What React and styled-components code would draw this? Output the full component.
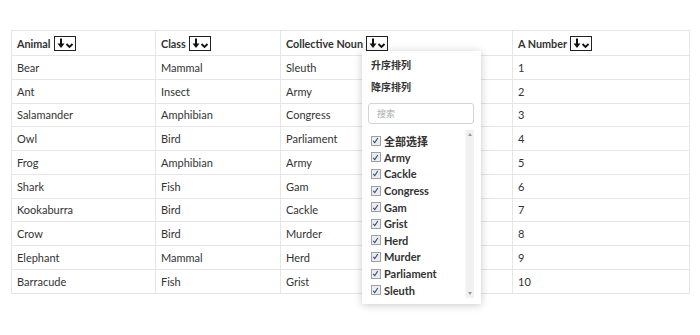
import styled, { createGlobalStyle } from 'styled-components';

const GlobalStyle = createGlobalStyle`
  body {
    margin: 0;
    background: #fff;
    font-family: Lato, "Noto Sans CJK SC", sans-serif;
    color: #333;
  }
`;

const Page = styled.div`
  padding: 30px 11px;
`;

const Table = styled.table`
  width: 678px;
  border-collapse: collapse;
  table-layout: fixed;
  font-size: 11px;
`;

const Th = styled.th`
  box-sizing: border-box;
  width: ${(p) => p.$w}px;
  height: 25px;
  padding: 0 5px;
  text-align: left;
  font-weight: 700;
  font-size: 10.8px;
  border: 1px solid #e6e6e6;
  white-space: nowrap;
`;

const Td = styled.td`
  height: 22.75px;
  padding: 0 5px;
  border: 1px solid #e6e6e6;
`;

const HeadCell = styled.div`
  display: flex;
  align-items: center;
  gap: 3px;
`;

const SortWrap = styled.span`
  position: relative;
  display: inline-flex;
`;

const SortButton = styled.span`
  display: inline-flex;
  align-items: center;
  justify-content: center;
  width: 20px;
  height: 13px;
  border: 1px solid #222;
  background: #fff;
`;

const Dropdown = styled.div`
  position: absolute;
  left: -4px;
  top: 15px;
  width: 119px;
  height: 253px;
  background: #fff;
  box-shadow: 0 1px 8px rgba(0, 0, 0, 0.22);
  padding: 6px 7px 0 6px;
  box-sizing: border-box;
  font-weight: 700;
  z-index: 5;
`;

const MenuItem = styled.div`
  font-family: "Noto Sans CJK SC", sans-serif;
  font-size: 10px;
  height: 22px;
  line-height: 16px;
  padding-left: 3px;
`;

const Search = styled.div`
  margin-top: 2px;
  height: 19px;
  border: 1px solid #d4d4d4;
  border-radius: 3px;
  display: flex;
  align-items: center;
  padding-left: 8px;
  font-family: "Noto Sans CJK SC", sans-serif;
  font-size: 9px;
  font-weight: 400;
  color: #aaa;
`;

const ListBox = styled.div`
  margin-top: 6px;
  display: flex;
  height: 168px;
`;

const List = styled.div`
  flex: 1;
  padding: 3px 0 0 3px;
`;

const Option = styled.div`
  display: flex;
  align-items: center;
  gap: 3px;
  height: 16.6px;
  font-size: 11px;
  font-family: Lato, "Noto Sans CJK SC", sans-serif;
`;

const Check = styled.span`
  display: inline-flex;
  align-items: center;
  justify-content: center;
  width: 8px;
  height: 8px;
  border: 1px solid #a0a0a0;
  background: #ececec;
`;

const Scrollbar = styled.div`
  width: 9px;
  background: #f1f1f1;
  border-left: 1px solid #f7f7f7;
  display: flex;
  flex-direction: column;
  justify-content: space-between;
  align-items: center;
  padding: 3px 0;
  box-sizing: border-box;
`;

const Arrow = styled.span`
  width: 0;
  height: 0;
  border-left: 2px solid transparent;
  border-right: 2px solid transparent;
  ${(p) =>
    p.$up
      ? 'border-bottom: 3px solid #999;'
      : 'border-top: 3px solid #999;'}
`;

const SortIcon = () => (
  <svg width="18" height="11" viewBox="0 0 18 11">
    <path d="M5 0.5 V7" stroke="#111" strokeWidth="2" />
    <path d="M1.5 5.5 L5 10 L8.5 5.5 Z" fill="#111" />
    <path d="M10.5 6 L13.5 9 L16.5 6" stroke="#111" strokeWidth="1.8" fill="none" />
  </svg>
);

const CheckMark = () => (
  <svg width="7" height="7" viewBox="0 0 7 7">
    <path d="M1.2 3.8 L2.8 5.6 L5.8 1" stroke="#2a4f8a" strokeWidth="1.1" fill="none" />
  </svg>
);

const columns = [
  { label: 'Animal', w: 144 },
  { label: 'Class', w: 125 },
  { label: 'Collective Noun', w: 232, open: true },
  { label: 'A Number', w: 177 },
];

const rows = [
  ['Bear', 'Mammal', 'Sleuth', 1],
  ['Ant', 'Insect', 'Army', 2],
  ['Salamander', 'Amphibian', 'Congress', 3],
  ['Owl', 'Bird', 'Parliament', 4],
  ['Frog', 'Amphibian', 'Army', 5],
  ['Shark', 'Fish', 'Gam', 6],
  ['Kookaburra', 'Bird', 'Cackle', 7],
  ['Crow', 'Bird', 'Murder', 8],
  ['Elephant', 'Mammal', 'Herd', 9],
  ['Barracude', 'Fish', 'Grist', 10],
];

const options = [
  '全部选择',
  'Army',
  'Cackle',
  'Congress',
  'Gam',
  'Grist',
  'Herd',
  'Murder',
  'Parliament',
  'Sleuth',
];

const FilterMenu = () => (
  <Dropdown>
    <MenuItem>升序排列</MenuItem>
    <MenuItem>降序排列</MenuItem>
    <Search>搜索</Search>
    <ListBox>
      <List>
        {options.map((o) => (
          <Option key={o}>
            <Check>
              <CheckMark />
            </Check>
            {o}
          </Option>
        ))}
      </List>
      <Scrollbar>
        <Arrow $up />
        <Arrow />
      </Scrollbar>
    </ListBox>
  </Dropdown>
);

export default function App() {
  return (
    <>
      <GlobalStyle />
      <Page>
        <Table>
          <thead>
            <tr>
              {columns.map((c) => (
                <Th key={c.label} $w={c.w}>
                  <HeadCell>
                    {c.label}
                    <SortWrap>
                      <SortButton>
                        <SortIcon />
                      </SortButton>
                      {c.open && <FilterMenu />}
                    </SortWrap>
                  </HeadCell>
                </Th>
              ))}
            </tr>
          </thead>
          <tbody>
            {rows.map((r) => (
              <tr key={r[0]}>
                {r.map((v, i) => (
                  <Td key={i}>{v}</Td>
                ))}
              </tr>
            ))}
          </tbody>
        </Table>
      </Page>
    </>
  );
}
